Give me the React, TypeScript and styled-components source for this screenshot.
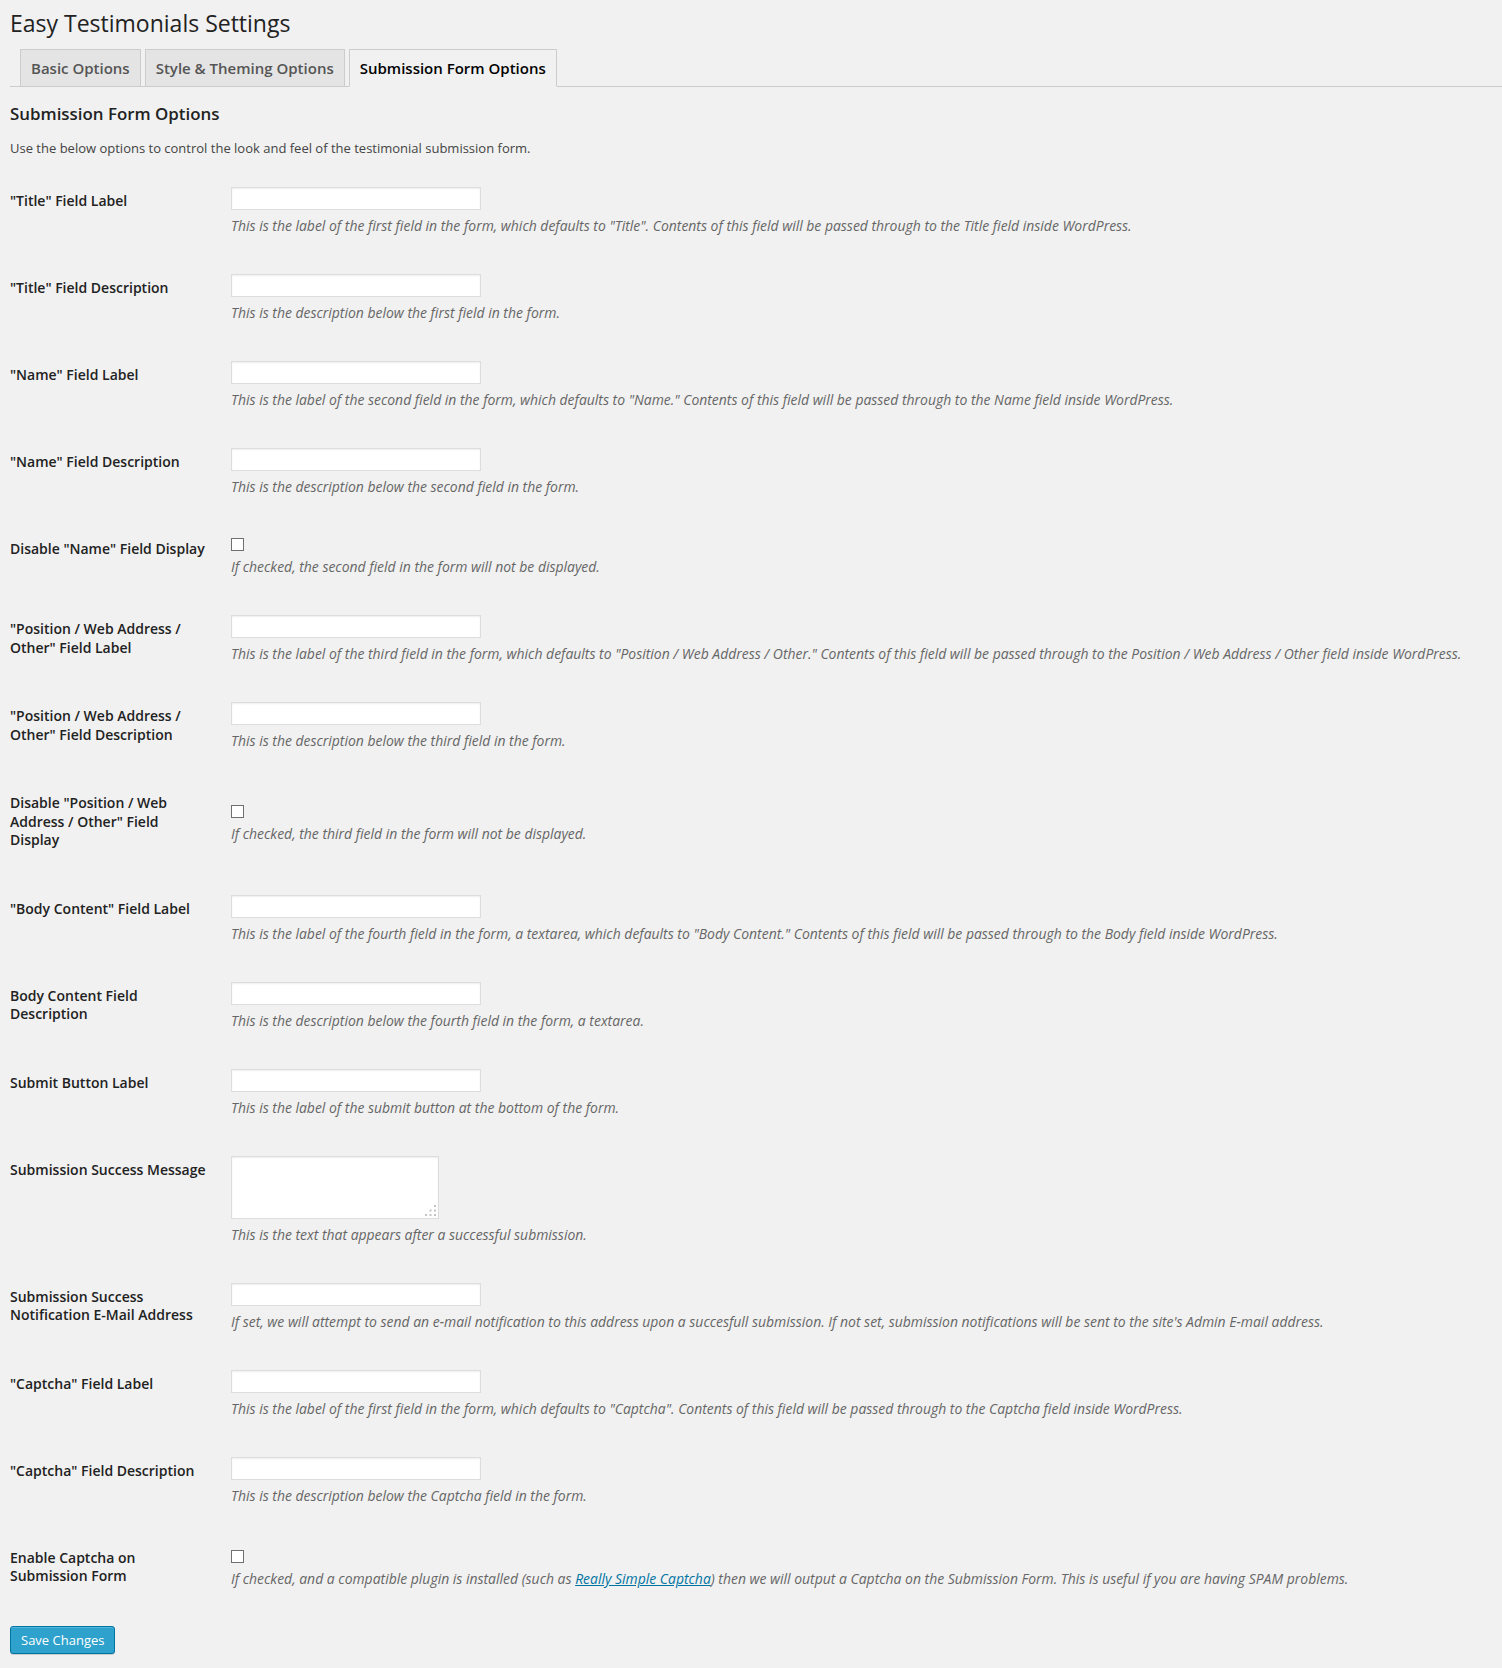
import React from "react";
import styled, { createGlobalStyle } from "styled-components";

type FieldKind = "text" | "checkbox" | "textarea";

interface SettingField {
  label: string;
  kind: FieldKind;
  description: React.ReactNode;
}

const fields: SettingField[] = [
  {
    label: '"Title" Field Label',
    kind: "text",
    description:
      'This is the label of the first field in the form, which defaults to "Title". Contents of this field will be passed through to the Title field inside WordPress.',
  },
  {
    label: '"Title" Field Description',
    kind: "text",
    description: "This is the description below the first field in the form.",
  },
  {
    label: '"Name" Field Label',
    kind: "text",
    description:
      'This is the label of the second field in the form, which defaults to "Name." Contents of this field will be passed through to the Name field inside WordPress.',
  },
  {
    label: '"Name" Field Description',
    kind: "text",
    description: "This is the description below the second field in the form.",
  },
  {
    label: 'Disable "Name" Field Display',
    kind: "checkbox",
    description: "If checked, the second field in the form will not be displayed.",
  },
  {
    label: '"Position / Web Address / Other" Field Label',
    kind: "text",
    description:
      'This is the label of the third field in the form, which defaults to "Position / Web Address / Other." Contents of this field will be passed through to the Position / Web Address / Other field inside WordPress.',
  },
  {
    label: '"Position / Web Address / Other" Field Description',
    kind: "text",
    description: "This is the description below the third field in the form.",
  },
  {
    label: 'Disable "Position / Web Address / Other" Field Display',
    kind: "checkbox",
    description: "If checked, the third field in the form will not be displayed.",
  },
  {
    label: '"Body Content" Field Label',
    kind: "text",
    description:
      'This is the label of the fourth field in the form, a textarea, which defaults to "Body Content." Contents of this field will be passed through to the Body field inside WordPress.',
  },
  {
    label: "Body Content Field Description",
    kind: "text",
    description: "This is the description below the fourth field in the form, a textarea.",
  },
  {
    label: "Submit Button Label",
    kind: "text",
    description: "This is the label of the submit button at the bottom of the form.",
  },
  {
    label: "Submission Success Message",
    kind: "textarea",
    description: "This is the text that appears after a successful submission.",
  },
  {
    label: "Submission Success Notification E-Mail Address",
    kind: "text",
    description:
      "If set, we will attempt to send an e-mail notification to this address upon a succesfull submission. If not set, submission notifications will be sent to the site's Admin E-mail address.",
  },
  {
    label: '"Captcha" Field Label',
    kind: "text",
    description:
      'This is the label of the first field in the form, which defaults to "Captcha". Contents of this field will be passed through to the Captcha field inside WordPress.',
  },
  {
    label: '"Captcha" Field Description',
    kind: "text",
    description: "This is the description below the Captcha field in the form.",
  },
  {
    label: "Enable Captcha on Submission Form",
    kind: "checkbox",
    description: (
      <>
        If checked, and a compatible plugin is installed (such as{" "}
        <a href="#">Really Simple Captcha</a>) then we will output a Captcha on the
        Submission Form. This is useful if you are having SPAM problems.
      </>
    ),
  },
];

const tabs = ["Basic Options", "Style & Theming Options", "Submission Form Options"];

// dotted resize grip, like the old webkit textarea corner
const ResizeGrip = () => (
  <Grip width="12" height="12" viewBox="0 0 12 12">
    <rect x="9" y="0" width="2" height="2" />
    <rect x="4.5" y="4.5" width="2" height="2" />
    <rect x="9" y="4.5" width="2" height="2" />
    <rect x="0" y="9" width="2" height="2" />
    <rect x="4.5" y="9" width="2" height="2" />
    <rect x="9" y="9" width="2" height="2" />
  </Grip>
);

export default function App() {
  return (
    <>
      <GlobalStyle />
      <Wrap>
        <PageTitle>Easy Testimonials Settings</PageTitle>
        <TabBar>
          {tabs.map((t, i) => (
            <Tab key={t} $active={i === tabs.length - 1}>
              {t}
            </Tab>
          ))}
        </TabBar>
        <SectionTitle>Submission Form Options</SectionTitle>
        <Intro>
          Use the below options to control the look and feel of the testimonial submission form.
        </Intro>
        <FormTable>
          {fields.map((f) => (
            <FormRow key={f.label}>
              <LabelCell>{f.label}</LabelCell>
              <ValueCell>
                {f.kind === "text" && <TextInput type="text" />}
                {f.kind === "checkbox" && <CheckBox />}
                {f.kind === "textarea" && (
                  <TextAreaBox>
                    <TextArea />
                    <ResizeGrip />
                  </TextAreaBox>
                )}
                <Description>{f.description}</Description>
              </ValueCell>
            </FormRow>
          ))}
        </FormTable>
        <PrimaryButton>Save Changes</PrimaryButton>
      </Wrap>
    </>
  );
}

const GlobalStyle = createGlobalStyle`
  body {
    margin: 0;
    background: #f1f1f1;
    color: #444;
    font-family: "Open Sans", "Liberation Sans", sans-serif;
    font-size: 13px;
  }
`;

const Wrap = styled.div`
  padding: 0 0 15px 10px;
`;

const PageTitle = styled.h2`
  margin: 0;
  padding-top: 9px;
  font-size: 23px;
  font-weight: 400;
  line-height: 29px;
  color: #222;
`;

const TabBar = styled.div`
  display: flex;
  gap: 4px;
  margin-top: 11px;
  padding-left: 10px;
  border-bottom: 1px solid #ccc;
`;

const Tab = styled.div<{ $active?: boolean }>`
  margin-bottom: -1px;
  padding: 6px 10px;
  font-size: 15px;
  font-weight: 600;
  line-height: 24px;
  border: 1px solid #ccc;
  border-bottom: 1px solid ${(p) => (p.$active ? "#f1f1f1" : "#ccc")};
  background: ${(p) => (p.$active ? "#f1f1f1" : "#e4e4e4")};
  color: ${(p) => (p.$active ? "#000" : "#555")};
`;

const SectionTitle = styled.h3`
  margin: 15px 0 0;
  font-size: 16.9px;
  font-weight: 600;
  line-height: 24px;
  color: #222;
`;

const Intro = styled.p`
  margin: 12px 0 0;
  line-height: 20px;
`;

const FormTable = styled.div`
  margin-top: 14px;
  display: flex;
  flex-direction: column;
`;

const FormRow = styled.div`
  display: grid;
  grid-template-columns: 210px 1fr;
  align-items: center;
`;

const LabelCell = styled.div`
  align-self: start;
  box-sizing: border-box;
  width: 210px;
  padding: 20px 10px 30px 0;
  font-size: 14px;
  font-weight: 600;
  line-height: 18.5px;
  color: #222;
`;

const ValueCell = styled.div`
  padding: 15px 10px 15px 11px;
`;

const TextInput = styled.input`
  display: block;
  box-sizing: border-box;
  width: 250px;
  height: 23px;
  margin: 0;
  border: 1px solid #ddd;
  background: #fff;
  box-shadow: inset 0 1px 2px rgba(0, 0, 0, 0.07);
  outline: none;
`;

const CheckBox = styled.span`
  display: block;
  box-sizing: border-box;
  width: 13px;
  height: 13px;
  margin-top: 3px;
  border: 1px solid #707070;
  background: #fff;
`;

const TextAreaBox = styled.div`
  position: relative;
  width: 208px;
`;

const TextArea = styled.textarea`
  display: block;
  box-sizing: border-box;
  width: 208px;
  height: 63px;
  margin: 0;
  resize: none;
  border: 1px solid #ddd;
  background: #fff;
  box-shadow: inset 0 1px 2px rgba(0, 0, 0, 0.07);
  outline: none;
`;

const Grip = styled.svg`
  position: absolute;
  right: 2px;
  bottom: 2px;
  fill: #c4c4c4;
`;

const Description = styled.p`
  margin: 6px 0 8px;
  font-size: 13.95px;
  line-height: 20px;
  font-style: italic;
  color: #666;

  a {
    color: #0074a2;
    text-decoration: underline;
  }
`;

const PrimaryButton = styled.button`
  display: block;
  margin-top: 10px;
  height: 28px;
  padding: 0 10px 1px;
  font-family: "Open Sans", "Liberation Sans", sans-serif;
  font-size: 13px;
  line-height: 26px;
  color: #fff;
  background: #2ea2cc;
  border: 1px solid #0074a2;
  border-radius: 3px;
  box-shadow: inset 0 1px 0 rgba(120, 200, 230, 0.5), 0 1px 0 rgba(0, 0, 0, 0.15);
`;
